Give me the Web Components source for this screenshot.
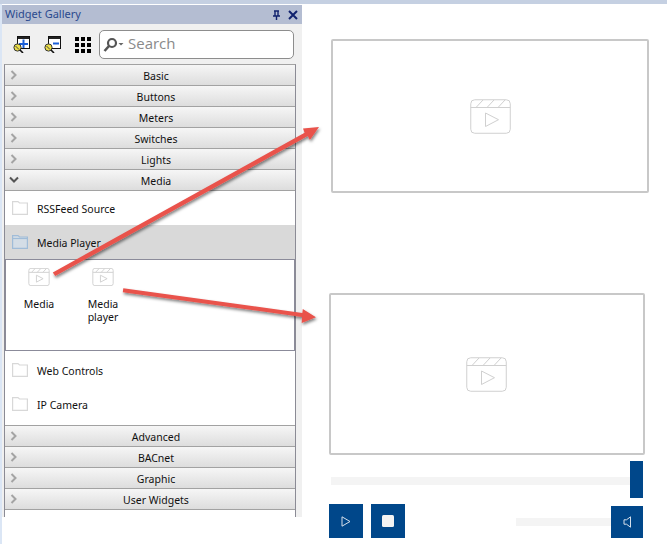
<!DOCTYPE html>
<html lang="en"><head><meta charset="utf-8"><title>Widget Gallery</title>
<style>
html,body{margin:0;padding:0;background:#fff;}
body{width:667px;height:544px;overflow:hidden;position:relative;font-family:"Noto Sans","Open Sans","Liberation Sans",sans-serif;}
</style></head><body>
<x-screen>
  <x-gallery slot="panel">
    <x-acc-header>Basic</x-acc-header>
    <x-acc-header>Buttons</x-acc-header>
    <x-acc-header>Meters</x-acc-header>
    <x-acc-header>Switches</x-acc-header>
    <x-acc-header>Lights</x-acc-header>
    <x-acc-header open>Media</x-acc-header>
    <x-folder-row>RSSFeed Source</x-folder-row>
    <x-folder-row selected>Media Player</x-folder-row>
    <x-tile-grid>
      <x-tile>Media</x-tile>
      <x-tile>Media<br>player</x-tile>
    </x-tile-grid>
    <x-folder-row style="margin-top:2px">Web Controls</x-folder-row>
    <x-folder-row style="margin-bottom:4px">IP Camera</x-folder-row>
    <x-acc-header first>Advanced</x-acc-header>
    <x-acc-header>BACnet</x-acc-header>
    <x-acc-header>Graphic</x-acc-header>
    <x-acc-header>User Widgets</x-acc-header>
  </x-gallery>
  <x-stage slot="stage"></x-stage>
</x-screen>
<x-arrows></x-arrows>
<script>
const def=(name,html)=>customElements.define(name,class extends HTMLElement{
  constructor(){super();this.attachShadow({mode:"open"}).innerHTML=html;}
});
const clapper=(w,h,sw,c)=>`<svg width="${w}" height="${h}" viewBox="0 0 41 35" fill="none" stroke="${c}" stroke-width="${sw}" style="display:block"><rect x=".75" y=".75" width="39.5" height="33.5" rx="4"/><path d="M.75 8.5H40.25M6 8.5 13 1M17 8.5 24 1M28 8.5 35 1M15.5 14V27.5L28.5 20.7Z"/></svg>`;
def("x-screen",`<style>
:host{display:block;width:667px;height:544px;background:#fff;}
.top{height:4px;background:#c5d0e2;}
.main{display:flex;height:540px;align-items:flex-start;}
.edge{width:2px;height:540px;background:#dbe6f5;flex:none;}
</style><div class="top"></div><div class="main"><div class="edge"></div><slot name="panel"></slot><slot name="stage"></slot></div>`);
def("x-gallery",`<style>
:host{display:block;width:300px;flex:none;margin-top:1px;height:512px;background:#f0f0f0;color:#111;}
.title{height:19px;background:#b4bdd2;display:flex;align-items:center;padding:0 4px 0 3px;gap:7px;}
.title span{flex:1;font:11px "Noto Sans",sans-serif;color:#2b4a8e;margin-top:-2px;}
.tools{height:40px;box-sizing:border-box;display:flex;align-items:center;padding:1px 8px 0 11px;}
.tools svg{display:block;flex:none;}
.search{margin-left:8px;flex:1;height:29px;box-sizing:border-box;border:1px solid #8d8d8d;border-radius:5px;background:#fff;display:flex;align-items:center;gap:1px;padding-left:3px;font:15px "Open Sans",sans-serif;color:#8a8a8a;}
.search span{margin-top:-3px;}
.acc{margin-left:2px;width:292px;height:453px;box-sizing:border-box;border:1px solid #8b8b95;border-bottom:0;border-top-color:#a2a2a2;background:#fff;}
</style>
<div class="title"><span>Widget Gallery</span>
<svg width="9" height="10" viewBox="0 0 9 10"><path d="M2 1H7M3 1V6H6V1M1 6H8M4.5 6V10" fill="none" stroke="#11226e" stroke-width="1.4"/></svg>
<svg width="10" height="10" viewBox="0 0 10 10"><path d="M1 1 9 9M9 1 1 9" stroke="#11226e" stroke-width="2"/></svg></div>
<div class="tools">
<svg width="17" height="17" viewBox="0 0 17 17"><rect x="4.5" y=".5" width="12" height="12" fill="#fff" stroke="#111"/><path d="M5 1H16V3H5Z" fill="#222"/><path d="M6 8H15M10.5 3.5V12" stroke="#1b5fd8" stroke-width="2"/><circle cx="4.5" cy="11.5" r="3.6" fill="#ecdf4a" stroke="#333"/><path d="M2.5 10 6 13.5" stroke="#444"/><path d="M7 14 10 17" stroke="#111" stroke-width="1.6"/></svg>
<svg width="17" height="17" viewBox="0 0 17 17" style="margin-left:14px"><rect x="4.5" y=".5" width="12" height="12" fill="#fff" stroke="#111"/><path d="M5 1H16V3H5Z" fill="#222"/><path d="M9 7.5H15" stroke="#1b5fd8" stroke-width="2"/><circle cx="4.5" cy="11.5" r="3.6" fill="#ecdf4a" stroke="#333"/><path d="M2.5 10 6 13.5" stroke="#444"/><path d="M7 14 10 17" stroke="#111" stroke-width="1.6"/></svg>
<svg width="16" height="16" viewBox="0 0 16 16" style="margin-left:14px" fill="#000"><rect width="4" height="4"/><rect x="6" width="4" height="4"/><rect x="12" width="4" height="4"/><rect y="6" width="4" height="4"/><rect x="6" y="6" width="4" height="4"/><rect x="12" y="6" width="4" height="4"/><rect y="12" width="4" height="4"/><rect x="6" y="12" width="4" height="4"/><rect x="12" y="12" width="4" height="4"/></svg>
<div class="search"><svg width="24" height="16" viewBox="0 0 24 16"><circle cx="9" cy="6" r="4" fill="none" stroke="#555" stroke-width="2.2"/><path d="M6 9 1.5 14" stroke="#555" stroke-width="2.6"/><path d="M15.5 6H20.5L18 8.5Z" fill="#666"/></svg><span>Search</span></div>
</div>
<div class="acc"><slot></slot></div>`);
customElements.define("x-acc-header",class extends HTMLElement{constructor(){super();const o=this.hasAttribute("open");this.attachShadow({mode:"open"}).innerHTML=`<style>
:host{display:flex;height:18px;padding-top:2px;border-bottom:1px solid #a2a2a2;background:linear-gradient(#f6f6f6,#dddddd);align-items:center;justify-content:center;position:relative;padding-left:12px;font:10.5px "Noto Sans",sans-serif;color:#111;}
:host([first]){border-top:1px solid #a2a2a2;}
svg{position:absolute;left:4px;top:5px;}
</style>${o?`<svg width="10" height="10" viewBox="0 0 10 10"><path d="M1 2.5 5 6.5 9 2.5" fill="none" stroke="#555" stroke-width="2"/></svg>`:`<svg width="10" height="10" viewBox="0 0 10 10"><path d="M2.5 1 6.5 5 2.5 9" fill="none" stroke="#a4a4a4" stroke-width="2"/></svg>`}<slot></slot>`;}});
customElements.define("x-folder-row",class extends HTMLElement{constructor(){super();const s=this.hasAttribute("selected");const c=s?"#a0bcd8":"#d8d8d8";this.attachShadow({mode:"open"}).innerHTML=`<style>
:host{display:flex;box-sizing:border-box;height:34px;align-items:center;padding:2px 0 0 7px;gap:9px;font:10.5px "Noto Sans",sans-serif;color:#111;}
:host([selected]){background:#d9d9d9;}
svg{display:block;flex:none;margin-top:-2px;}
</style><svg width="16" height="14" viewBox="0 0 16 14" fill="${s?'#d4dde6':'#fff'}" stroke="${c}" stroke-width="1.2"><path d="M.6 13.4V.6H6L7.5 2H15.4V13.4Z"/>${s?'<path d="M.5 3.5H15.5" fill="none"/>':''}</svg><slot></slot>`;}});
def("x-tile-grid",`<style>
:host{display:flex;box-sizing:border-box;height:92px;border:1px solid #8b8b9a;background:#fff;padding:8px 0 0 1px;}
</style><slot></slot>`);
def("x-tile",`<style>
:host{display:flex;flex-direction:column;align-items:center;width:64px;font:10.5px/13px "Noto Sans",sans-serif;color:#111;text-align:center;}
.t{margin-top:12px;}
</style>${clapper(22,18,1.9,"#d2d2d2")}<div class="t"><slot></slot></div>`);
def("x-video",`<style>
:host{display:flex;box-sizing:border-box;border:2px solid #c8c8c8;border-radius:2px;align-items:center;justify-content:center;background:#fff;}
</style>${clapper(41,35,1,"#d0d0d0")}`);
def("x-media-btn",`<style>
:host{display:flex;width:34px;height:34px;background:#00478a;align-items:center;justify-content:center;flex:none;}
</style><slot></slot>`);
def("x-stage",`<style>
:host{display:block;flex:1;padding-top:35px;}
.v1{width:318px;height:154px;margin-left:29px;}
.v2{width:316px;height:162px;margin:100px 0 0 27px;padding-right:1px;}
.seek{display:flex;margin:6px 0 0 29px;height:37px;width:312px;align-items:flex-start;}
.track{flex:1;height:8px;margin-top:16px;background:#f4f4f4;}
.thumb{width:13px;height:37px;background:#00478a;}
.ctl{display:flex;margin:6px 0 0 27px;width:314px;gap:8px;align-items:flex-end;}
.vol{margin-left:auto;display:flex;align-items:center;}
.vol i{display:block;width:95px;height:8px;background:#f4f4f4;}
.vol x-media-btn{width:32px;height:32px;}
svg{display:block;}
</style>
<x-video class="v1"></x-video><x-video class="v2"></x-video>
<div class="seek"><div class="track"></div><div class="thumb"></div></div>
<div class="ctl">
<x-media-btn><svg width="10" height="11" viewBox="0 0 10 11"><path d="M1 .8V10.2L9 5.5Z" fill="none" stroke="#d5dfea" stroke-width="1"/></svg></x-media-btn>
<x-media-btn><div style="width:12px;height:12px;border-radius:1.5px;background:#f3f3f3"></div></x-media-btn>
<div class="vol"><i></i><x-media-btn><svg width="9" height="12" viewBox="0 0 9 12"><path d="M7.5 .8V11.2L3.5 8.2H1V3.8H3.5Z" fill="none" stroke="#d5dfea" stroke-width="1"/></svg></x-media-btn></div>
</div>`);
def("x-arrows",`<style>
:host{position:absolute;left:0;top:0;width:667px;height:544px;pointer-events:none;}
svg{display:block;}
</style><svg width="667" height="544" viewBox="0 0 667 544"><defs><filter id="s" x="-10%" y="-10%" width="120%" height="130%"><feDropShadow dx="1" dy="2" stdDeviation="1.4" flood-color="#000" flood-opacity=".5"/></filter></defs>
<g filter="url(#s)" fill="#e9524c" stroke="none"><path d="M52.8 272.4 304.6 132.8 303 128.4 319 127 309.9 140 307.8 136 55.2 276Z"/><path d="M123.3 288.2 302.3 313 302.8 309 316 317.3 301.7 323 302 316.9 122.8 292.2Z"/></g></svg>`);
</script>
</body></html>
